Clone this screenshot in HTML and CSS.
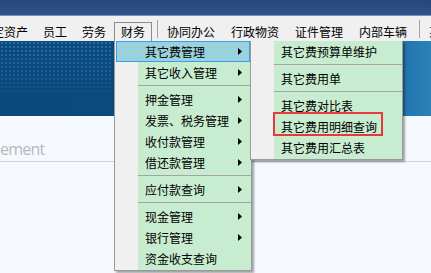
FILE: index.html
```html
<!DOCTYPE html>
<html lang="zh-CN">
<head>
<meta charset="utf-8">
<title>财务 - 其它费管理</title>
<link rel="stylesheet" href="styles.css">
</head>
<body>
<div class="app">
  <header class="titlebar"></header>
  <nav class="menubar">
    <span class="mi first">固定资产</span>
    <span class="mi">员工</span>
    <span class="mi">劳务</span>
    <span class="mi active">财务</span>
    <span class="msep"></span>
    <span class="mi g2">协同办公</span>
    <span class="mi g2">行政物资</span>
    <span class="mi g2">证件管理</span>
    <span class="mi g2">内部车辆</span>
    <span class="msep"></span>
    <span class="mi g2">某</span>
  </nav>
  <section class="banner"><div class="dots"></div></section>
  <main class="content">
    <div class="page-head"><h1 class="page-title">ement</h1></div>
  </main>
</div>

<div class="menu menu-main">
  <div class="row hover"><span>其它费管理</span><svg class="arr" width="4" height="7" viewBox="0 0 4 7"><polygon points="0,0 4,3.5 0,7"/></svg></div>
  <div class="row"><span>其它收入管理</span><svg class="arr" width="4" height="7" viewBox="0 0 4 7"><polygon points="0,0 4,3.5 0,7"/></svg></div>
  <div class="sep"></div>
  <div class="row"><span>押金管理</span><svg class="arr" width="4" height="7" viewBox="0 0 4 7"><polygon points="0,0 4,3.5 0,7"/></svg></div>
  <div class="row"><span>发票、税务管理</span><svg class="arr" width="4" height="7" viewBox="0 0 4 7"><polygon points="0,0 4,3.5 0,7"/></svg></div>
  <div class="row"><span>收付款管理</span><svg class="arr" width="4" height="7" viewBox="0 0 4 7"><polygon points="0,0 4,3.5 0,7"/></svg></div>
  <div class="row"><span>借还款管理</span><svg class="arr" width="4" height="7" viewBox="0 0 4 7"><polygon points="0,0 4,3.5 0,7"/></svg></div>
  <div class="sep"></div>
  <div class="row"><span>应付款查询</span><svg class="arr" width="4" height="7" viewBox="0 0 4 7"><polygon points="0,0 4,3.5 0,7"/></svg></div>
  <div class="sep"></div>
  <div class="row"><span>现金管理</span><svg class="arr" width="4" height="7" viewBox="0 0 4 7"><polygon points="0,0 4,3.5 0,7"/></svg></div>
  <div class="row"><span>银行管理</span><svg class="arr" width="4" height="7" viewBox="0 0 4 7"><polygon points="0,0 4,3.5 0,7"/></svg></div>
  <div class="row"><span>资金收支查询</span></div>
</div>

<div class="menu menu-sub">
  <div class="row"><span>其它费预算单维护</span></div>
  <div class="sep"></div>
  <div class="row"><span>其它费用单</span></div>
  <div class="sep"></div>
  <div class="row"><span>其它费对比表</span></div>
  <div class="row"><span>其它费用明细查询</span></div>
  <div class="row"><span>其它费用汇总表</span></div>
</div>

<div class="callout"></div>
</body>
</html>
```

FILE: styles.css
```css
html, body {
  margin: 0;
  padding: 0;
}
body {
  width: 431px;
  height: 273px;
  overflow: hidden;
  position: relative;
  font-family: "Noto Sans CJK SC", "Noto Sans", sans-serif;
  font-size: 12px;
  color: #000;
  background: #f5f9fd;
}
.app {
  display: flex;
  flex-direction: column;
  height: 273px;
}
.titlebar {
  height: 15px;
  flex: none;
  background: linear-gradient(#26467a, #31538a);
  border-bottom: 1px solid #7990b4;
}
.menubar {
  height: 25px;
  flex: none;
  display: flex;
  align-items: flex-end;
  gap: 1px;
  background: #f0f0f0;
  white-space: nowrap;
  overflow: hidden;
}
.mi {
  flex: none;
  box-sizing: border-box;
  height: 19px;
  line-height: 17px;
  padding: 0 6px;
  border: 1px solid transparent;
  border-bottom: none;
}
.mi.first {
  margin-left: -27px;
}
.mi.g2 {
  margin-left: 1px;
}
.mi.active {
  border-color: #8c8c8c;
}
.msep {
  flex: none;
  align-self: flex-end;
  width: 1px;
  height: 18px;
  margin: 0 0 3px 4px;
  background: #a3a3a3;
}
.banner {
  height: 75px;
  flex: none;
  display: flex;
  background: linear-gradient(to right, #0b497c 0%, #0c4c80 72%, #1c6ea5 90%, #2a82b8 100%);
}
.dots {
  width: 112px;
  height: 52px;
  background: radial-gradient(circle, rgba(70, 150, 220, 0.55) 0.8px, transparent 1.3px) 0 0 / 4px 4px;
  -webkit-mask-image: linear-gradient(to bottom, rgba(0,0,0,0.9), rgba(0,0,0,0.2));
  mask-image: linear-gradient(to bottom, rgba(0,0,0,0.9), rgba(0,0,0,0.2));
}
.content {
  flex: 1;
  background: #f5f9fd;
}
.page-head {
  height: 45px;
  border-bottom: 1px solid #cfd3d8;
  display: flex;
  align-items: flex-end;
}
.page-title {
  margin: 0 0 -1px 0;
  font-family: "Open Sans", "Liberation Sans", sans-serif;
  font-weight: 400;
  font-size: 16px;
  line-height: 26px;
  color: #b5b9be;
  letter-spacing: -0.8px;
}

.menu {
  position: absolute;
  top: 41px;
  box-sizing: border-box;
  padding-bottom: 1px;
  border: 1px solid #9a9a9a;
  border-top: none;
  background: linear-gradient(to right, #f0f0f0 0 23px, #c8ecd0 23px);
  box-shadow: 2px 2px 2px rgba(0, 0, 0, 0.35);
}
.menu-main {
  left: 114px;
  width: 138px;
  z-index: 2;
}
.menu-sub {
  left: 250px;
  width: 153px;
  z-index: 3;
}
.row {
  display: flex;
  align-items: center;
  justify-content: space-between;
  height: 21px;
  padding: 0 9px 0 30px;
  white-space: nowrap;
}
.row.hover {
  box-sizing: border-box;
  margin: 0 1px;
  padding: 0 7px 0 28px;
  border: 1px solid #3a9cf2;
  background: #99d2dc;
}
.arr {
  flex: none;
  display: block;
  fill: #000;
}
.sep {
  height: 1px;
  margin: 2px 0 3px 23px;
  background: #a4a4a4;
}
.callout {
  position: absolute;
  left: 273px;
  top: 112px;
  width: 110px;
  height: 24px;
  box-sizing: border-box;
  border: 2px solid #e8393a;
  z-index: 4;
}
```
